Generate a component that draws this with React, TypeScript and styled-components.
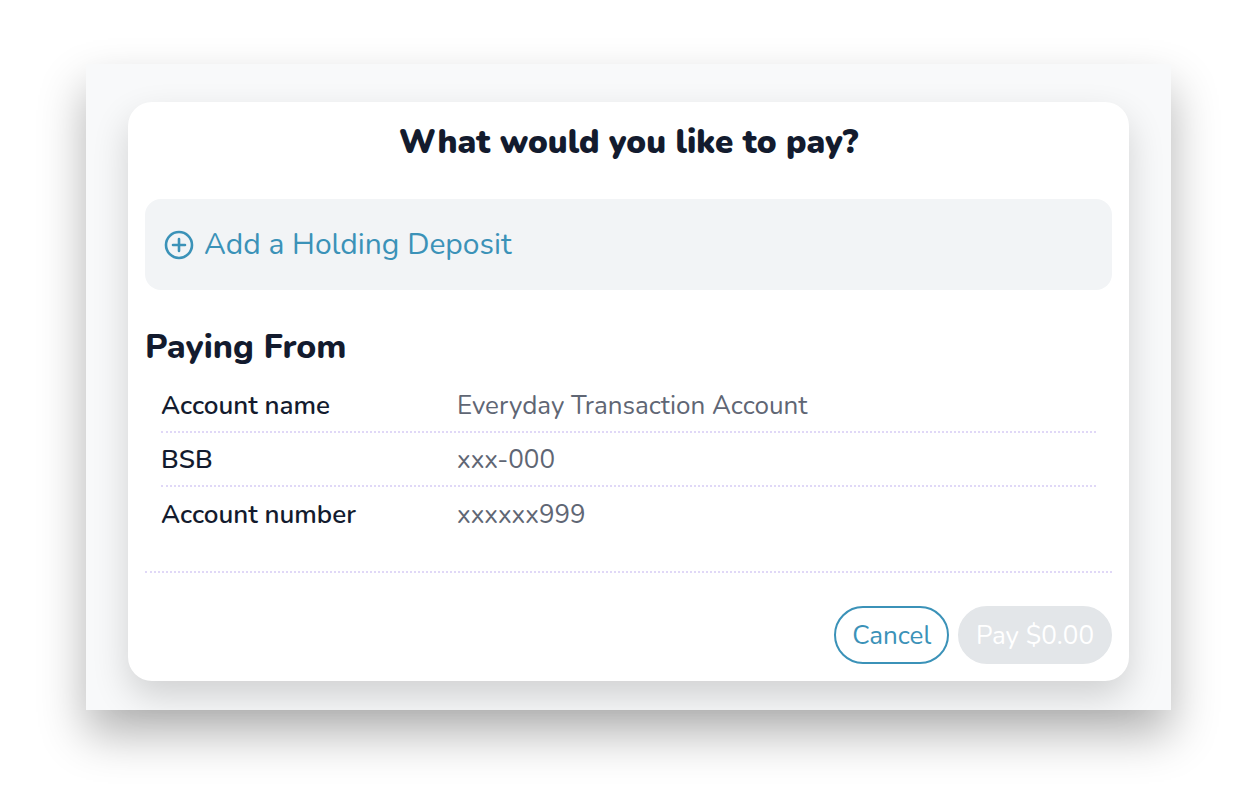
import React from 'react';
import styled, { createGlobalStyle } from 'styled-components';

const GlobalStyle = createGlobalStyle`
  * {
    box-sizing: border-box;
  }

  body {
    margin: 0;
    padding: 0;
    background: #ffffff;
    font-family: Nunito, Lato, "Noto Sans", sans-serif;
    color: #131b2e;
  }

  h1, h2 {
    margin: 0;
  }
`;

const Page = styled.div`
  width: 1235px;
  height: 797px;
  padding: 64px 0 0 86px;
`;

const Frame = styled.div`
  width: 1085px;
  height: 646px;
  padding: 38px 42px;
  background: #f8f9fa;
  box-shadow: 0 24px 44px rgba(0, 0, 0, 0.3);
`;

const Card = styled.div`
  width: 1001px;
  height: 579px;
  padding: 20px 17px 17px;
  background: #ffffff;
  border-radius: 24px;
  box-shadow: 0 16px 36px rgba(0, 0, 0, 0.16);
  display: flex;
  flex-direction: column;
`;

const Title = styled.h1`
  text-align: center;
  font-size: 33px;
  font-weight: 900;
  line-height: 42px;
  color: #131b2e;
`;

const DepositBox = styled.button`
  margin-top: 35px;
  height: 91px;
  width: 100%;
  border: none;
  border-radius: 16px;
  background: #f2f4f6;
  padding: 0 19px;
  display: flex;
  align-items: center;
  gap: 10px;
  font-family: inherit;
  font-size: 30px;
  color: #3b92b8;
  cursor: pointer;
`;

const Heading = styled.h2`
  margin-top: 37px;
  font-size: 34px;
  font-weight: 800;
  line-height: 40px;
  color: #131b2e;
`;

const DetailList = styled.div`
  margin-top: 12px;
  padding: 0 16px;
`;

const DetailRow = styled.div<{ $last?: boolean }>`
  display: grid;
  grid-template-columns: 296px 1fr;
  height: 54px;
  align-items: center;
  border-bottom: ${(p) => (p.$last ? 'none' : '2px dotted #e0d8f7')};
`;

const Label = styled.span`
  font-size: 26px;
  font-weight: 600;
  color: #131b2e;
`;

const Value = styled.span`
  font-size: 26px;
  font-weight: 400;
  color: #5f6674;
`;

const Divider = styled.div`
  margin-top: 30px;
  border-top: 2px dotted #e0d8f7;
`;

const Footer = styled.div`
  margin-top: auto;
  display: flex;
  justify-content: flex-end;
  gap: 9px;
`;

const PillButton = styled.button<{ $variant: 'outline' | 'disabled' }>`
  height: 58px;
  padding: 0 16px;
  border-radius: 29px;
  font-family: inherit;
  font-size: 26px;
  border: 2px solid ${(p) => (p.$variant === 'outline' ? '#3b92b8' : '#e3e6e9')};
  background: ${(p) => (p.$variant === 'outline' ? '#ffffff' : '#e3e6e9')};
  color: ${(p) => (p.$variant === 'outline' ? '#3b92b8' : '#ffffff')};
  cursor: ${(p) => (p.$variant === 'outline' ? 'pointer' : 'default')};
`;

const PlusCircle = () => (
  <svg width="30" height="30" viewBox="0 0 30 30" fill="none" stroke="#3b92b8" strokeWidth="2.6" strokeLinecap="round">
    <circle cx="15" cy="15" r="13" />
    <path d="M15 9v12M9 15h12" />
  </svg>
);

const details = [
  { label: 'Account name', value: 'Everyday Transaction Account' },
  { label: 'BSB', value: 'xxx-000' },
  { label: 'Account number', value: 'xxxxxx999' },
];

const App = () => {
  return (
    <>
      <GlobalStyle />
      <Page>
        <Frame>
          <Card>
            <Title>What would you like to pay?</Title>
            <DepositBox type="button">
              <PlusCircle />
              Add a Holding Deposit
            </DepositBox>
            <Heading>Paying From</Heading>
            <DetailList>
              {details.map((d, i) => (
                <DetailRow key={d.label} $last={i === details.length - 1}>
                  <Label>{d.label}</Label>
                  <Value>{d.value}</Value>
                </DetailRow>
              ))}
            </DetailList>
            <Divider />
            <Footer>
              <PillButton type="button" $variant="outline">Cancel</PillButton>
              <PillButton type="button" $variant="disabled" disabled>Pay $0.00</PillButton>
            </Footer>
          </Card>
        </Frame>
      </Page>
    </>
  );
};

export default App;
